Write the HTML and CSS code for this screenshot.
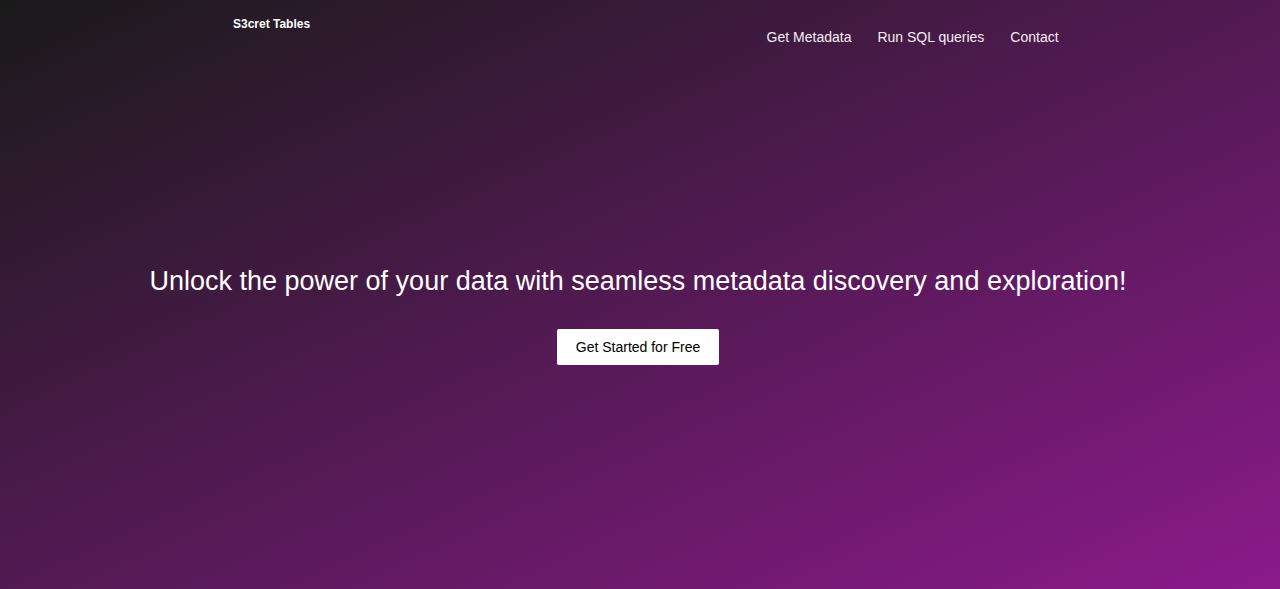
FILE: index.html
```html
<!DOCTYPE html>
<html lang="en">
<head>
<meta charset="utf-8">
<meta name="viewport" content="width=device-width, initial-scale=1">
<title>S3cret Tables</title>
<link rel="stylesheet" href="styles.css">
</head>
<body>
<div class="page">
  <header class="header">
    <h1 class="brand">S3cret Tables</h1>
    <nav class="nav">
      <a class="nav-link" href="#metadata">Get Metadata</a>
      <a class="nav-link" href="#queries">Run SQL queries</a>
      <a class="nav-link" href="#contact">Contact</a>
    </nav>
  </header>
  <main class="hero">
    <p class="tagline">Unlock the power of your data with seamless metadata discovery and exploration!</p>
    <button class="cta" type="button">Get Started for Free</button>
  </main>
</div>
</body>
</html>
```

FILE: styles.css
```css
* {
  box-sizing: border-box;
}

body {
  margin: 0;
  font-family: "Liberation Sans", Arial, sans-serif;
  color: #fff;
}

.page {
  display: flex;
  flex-direction: column;
  min-height: 100vh;
  background: linear-gradient(to bottom right, #1a1a1a, #8b1a8b);
}

.header {
  display: flex;
  justify-content: space-between;
  align-items: flex-start;
  padding: 16px 17.3% 0 18.2%;
}

.brand {
  margin: 0;
  font-size: 12px;
  line-height: 16px;
}

.nav {
  display: flex;
  gap: 26px;
  padding-top: 12px;
}

.nav-link {
  color: #f5eef5;
  font-size: 14px;
  line-height: 18px;
  text-decoration: none;
}

.hero {
  flex: 1;
  display: flex;
  flex-direction: column;
  align-items: center;
  justify-content: center;
  gap: 32px;
  padding: 0 20px 6px 16px;
  text-align: center;
}

.tagline {
  margin: 0;
  font-size: 27px;
  line-height: 32px;
}

.cta {
  padding: 10px 19px;
  border: 0;
  border-radius: 2px;
  background: #fff;
  color: #000;
  font-family: inherit;
  font-size: 14px;
  line-height: 16px;
  cursor: pointer;
}
```
